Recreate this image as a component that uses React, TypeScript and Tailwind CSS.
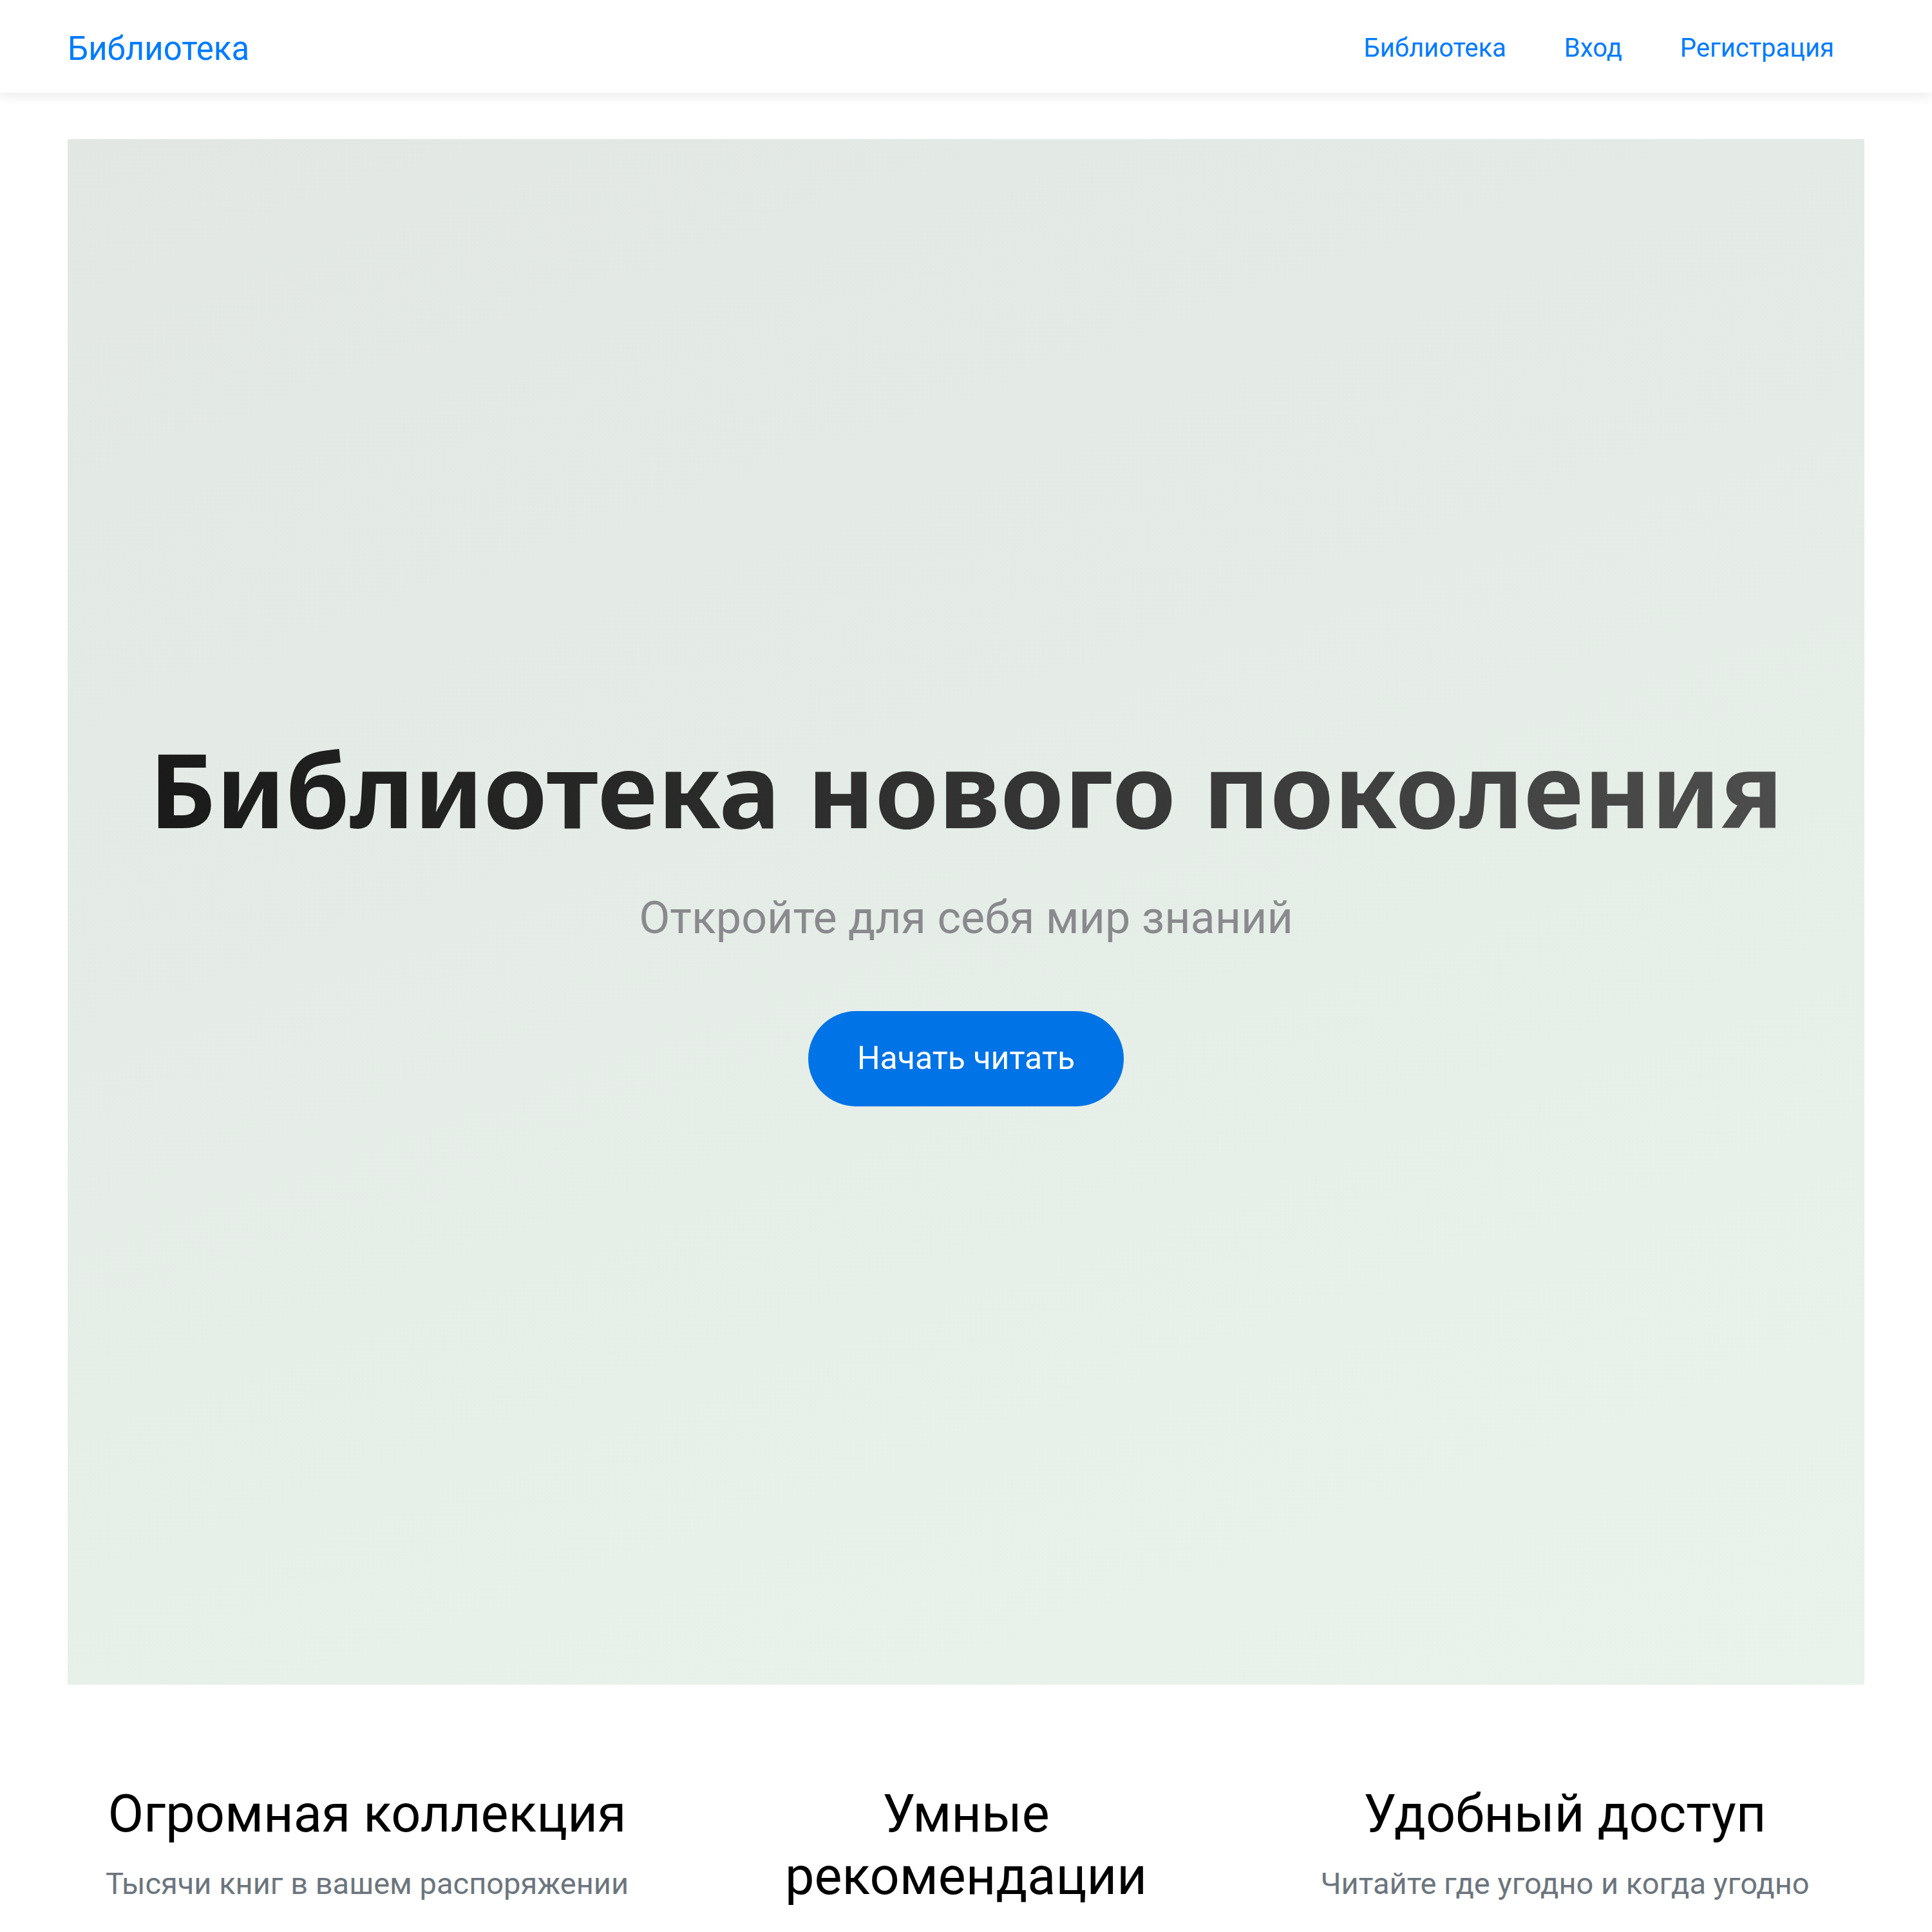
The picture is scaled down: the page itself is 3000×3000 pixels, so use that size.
const NAV = ["Библиотека", "Вход", "Регистрация"];

const FEATURES = [
  { title: "Огромная коллекция", text: "Тысячи книг в вашем распоряжении" },
  { title: "Умные рекомендации", text: "" },
  { title: "Удобный доступ", text: "Читайте где угодно и когда угодно" },
];

export default function App() {
  return (
    <div className="min-h-screen bg-white font-['Roboto',sans-serif]">
      {/* Navbar */}
      <header className="relative z-10 h-[144px] bg-white shadow-[0_6px_18px_rgba(0,0,0,0.08)]">
        <div className="flex h-full items-center justify-between pl-[105px] pr-[107px] pt-[6px]">
          <a href="#" className="text-[51px] leading-none text-[#007bff]">
            Библиотека
          </a>
          <nav className="flex">
            {NAV.map((item) => (
              <a
                key={item}
                href="#"
                className="px-[45px] text-[40px] leading-none text-[#007bff]"
              >
                {item}
              </a>
            ))}
          </nav>
        </div>
      </header>

      <main className="px-[105px]">
        {/* Hero */}
        <section className="mt-[72px] flex h-[2400px] flex-col items-center justify-center bg-[linear-gradient(160deg,#e2e7e4,#e9f3eb)] pt-[13px]">
          <h1 className="bg-linear-to-r from-[#1a1a1a] to-[#4d4d4d] bg-clip-text font-['Noto_Sans',sans-serif] text-[160px] font-bold leading-[1.2] text-transparent">
            Библиотека нового поколения
          </h1>
          <p className="mt-[53px] text-[70px] leading-[1.5] text-[#8a8a8e]">
            Откройте для себя мир знаний
          </p>
          <button className="mt-[92px] h-[148px] rounded-full bg-[#0073e6] px-[76px] text-[50px] text-white">
            Начать читать
          </button>
        </section>

        {/* Features */}
        <section className="grid grid-cols-3 pt-[152px]">
          {FEATURES.map((f) => (
            <div key={f.title} className="px-[48px] text-center">
              <h3 className="text-[81px] leading-[1.2] text-black">{f.title}</h3>
              {f.text && (
                <p className="mt-[25px] text-[47px] leading-[1.5] text-[#6c757d]">{f.text}</p>
              )}
            </div>
          ))}
        </section>
      </main>
    </div>
  );
}
